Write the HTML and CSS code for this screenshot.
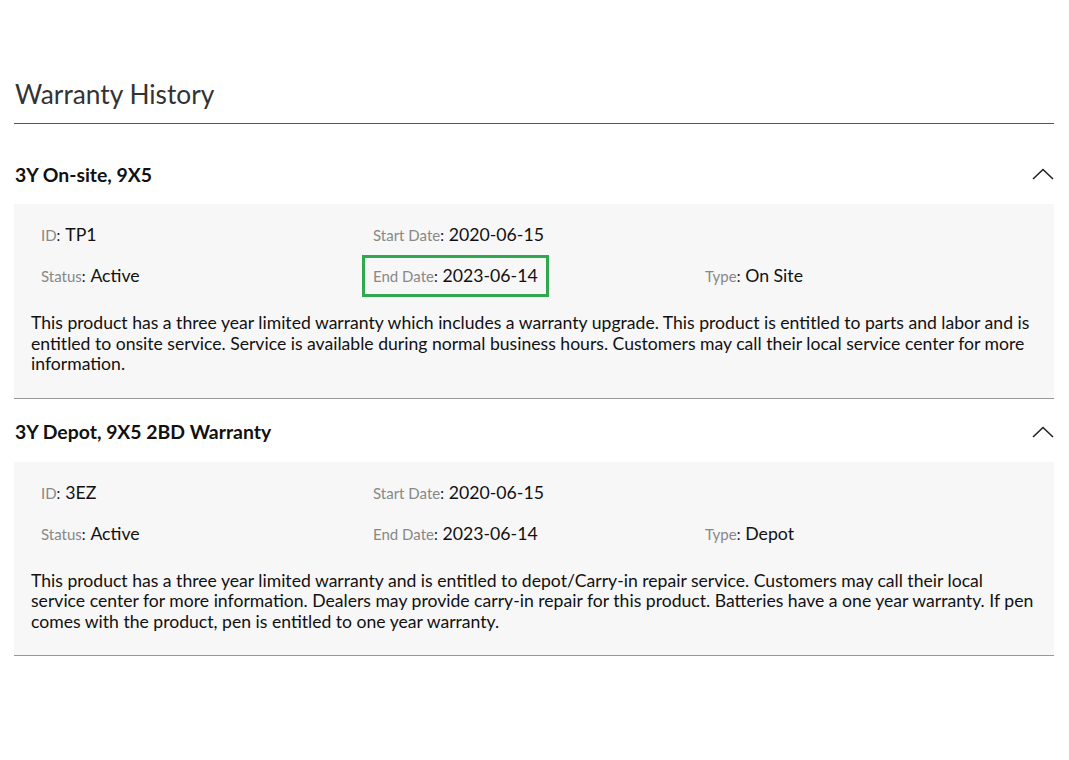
FILE: index.html
```html
<!DOCTYPE html>
<html>
<head>
<meta charset="utf-8">
<link rel="stylesheet" href="styles.css">
</head>
<body>
<div class="page">
  <h1 class="title">Warranty History</h1>
  <div class="list">
    <section class="warranty">
      <div class="head">
        <span class="head-name">3Y On-site, 9X5</span>
        <svg class="chev" width="22" height="12" viewBox="0 0 22 12"><path d="M1 11 L11 1.5 L21 11" fill="none" stroke="#222" stroke-width="1.6"/></svg>
      </div>
      <div class="panel">
        <div class="grid">
          <div class="cell"><span class="field"><span class="lbl">ID</span>: <span class="val">TP1</span></span></div>
          <div class="cell"><span class="field"><span class="lbl">Start Date</span>: <span class="val">2020-06-15</span></span></div>
          <div class="cell"></div>
          <div class="cell"><span class="field"><span class="lbl">Status</span>: <span class="val">Active</span></span></div>
          <div class="cell"><span class="field hl"><span class="lbl">End Date</span>: <span class="val">2023-06-14</span></span></div>
          <div class="cell"><span class="field"><span class="lbl">Type</span>: <span class="val">On Site</span></span></div>
        </div>
        <p class="desc">This product has a three year limited warranty which includes a warranty upgrade. This product is entitled to parts and labor and is entitled to onsite service. Service is available during normal business hours. Customers may call their local service center for more information.</p>
      </div>
    </section>
    <section class="warranty">
      <div class="head">
        <span class="head-name">3Y Depot, 9X5 2BD Warranty</span>
        <svg class="chev" width="22" height="12" viewBox="0 0 22 12"><path d="M1 11 L11 1.5 L21 11" fill="none" stroke="#222" stroke-width="1.6"/></svg>
      </div>
      <div class="panel">
        <div class="grid">
          <div class="cell"><span class="field"><span class="lbl">ID</span>: <span class="val">3EZ</span></span></div>
          <div class="cell"><span class="field"><span class="lbl">Start Date</span>: <span class="val">2020-06-15</span></span></div>
          <div class="cell"></div>
          <div class="cell"><span class="field"><span class="lbl">Status</span>: <span class="val">Active</span></span></div>
          <div class="cell"><span class="field"><span class="lbl">End Date</span>: <span class="val">2023-06-14</span></span></div>
          <div class="cell"><span class="field"><span class="lbl">Type</span>: <span class="val">Depot</span></span></div>
        </div>
        <p class="desc">This product has a three year limited warranty and is entitled to depot/Carry-in repair service. Customers may call their local service center for more information. Dealers may provide carry-in repair for this product. Batteries have a one year warranty. If pen comes with the product, pen is entitled to one year warranty.</p>
      </div>
    </section>
  </div>
</div>
</body>
</html>
```

FILE: styles.css
```css
html, body {
  margin: 0;
  padding: 0;
  background: #fff;
}
body {
  font-family: Lato, "Open Sans", "Liberation Sans", sans-serif;
  color: #111;
}
.page {
  width: 1040px;
  margin-left: 14px;
  padding-top: 78px;
}
.title {
  margin: 0;
  font-size: 26.3px;
  font-weight: 400;
  line-height: 32px;
  color: #333;
  padding-left: 1px;
  padding-bottom: 13px;
  border-bottom: 1px solid #555;
}
.list {
  padding-top: 17px;
}
.head {
  height: 63px;
  box-sizing: border-box;
  padding-top: 3px;
  display: flex;
  align-items: center;
  justify-content: space-between;
  padding-left: 1px;
}
.head-name {
  font-size: 19.4px;
  font-weight: 700;
  color: #111;
}
.chev {
  display: block;
}
.panel {
  background: #f7f7f7;
  border-bottom: 1px solid #999;
  padding: 10px 17px 23px 17px;
}
.grid {
  display: grid;
  grid-template-columns: 332px 332px 332px;
  margin-left: -1px;
}
.cell {
  height: 41px;
}
.field {
  display: inline-block;
  border: 3px solid transparent;
  padding: 0 8px;
  line-height: 35px;
  font-size: 15px;
  color: #111;
}
.field.hl {
  border-color: #2fa84f;
}
.lbl {
  color: #888;
}
.val {
  font-size: 17.7px;
  color: #111;
  margin-left: 1px;
}
.desc {
  margin: 17px 0 0 0;
  font-size: 17.6px;
  line-height: 20.5px;
  color: #111;
}
```
